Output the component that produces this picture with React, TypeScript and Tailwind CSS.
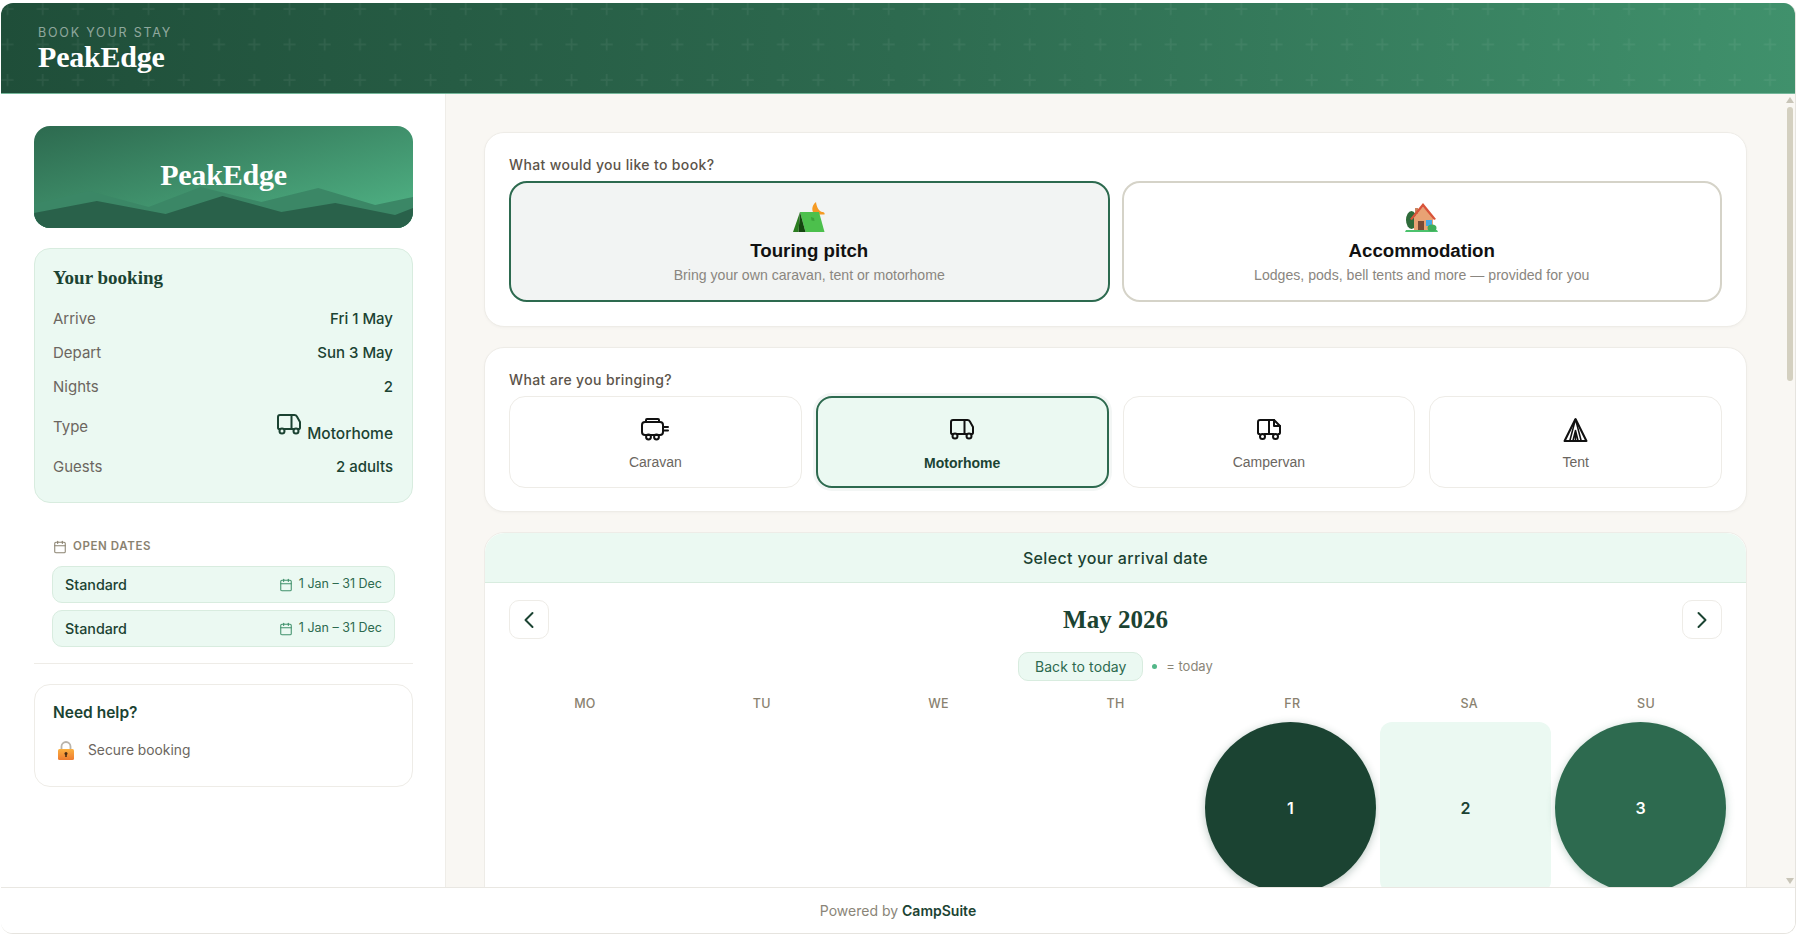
import { Calendar, ChevronLeft, ChevronRight } from "lucide-react";

const sans = "font-['Inter','Noto_Sans',sans-serif]";
const serif = "font-['Liberation_Serif',serif]";

function MotorhomeIcon({ className }: { className?: string }) {
  return (
    <svg viewBox="0 0 24 21" fill="none" stroke="currentColor" strokeWidth="2" strokeLinecap="round" strokeLinejoin="round" className={className}>
      <path d="M2.6 15A1.6 1.6 0 0 1 1 13.4V3a2 2 0 0 1 2-2h14.5c1 0 1.9.5 2.4 1.4L23 8v5.4a1.6 1.6 0 0 1-1.6 1.6" />
      <path d="M7.5 15h9M14.5 1v14" />
      <circle cx="5" cy="17" r="2.5" />
      <circle cx="19" cy="17" r="2.5" />
    </svg>
  );
}

function CaravanIcon({ className }: { className?: string }) {
  return (
    <svg viewBox="0 0 28 24" fill="none" stroke="currentColor" strokeWidth="2" strokeLinecap="round" strokeLinejoin="round" className={className}>
      <rect x="1" y="5" width="21" height="13" rx="3" />
      <path d="M5 5V3a1 1 0 0 1 1-1h11a1 1 0 0 1 1 1v2" />
      <circle cx="7.5" cy="20" r="2.4" />
      <circle cx="15.5" cy="20" r="2.4" />
      <path d="M23 10h4M23 13.5h4" />
    </svg>
  );
}

function CampervanIcon({ className }: { className?: string }) {
  return (
    <svg viewBox="0 0 24 21" fill="none" stroke="currentColor" strokeWidth="2" strokeLinecap="round" strokeLinejoin="round" className={className}>
      <path d="M2.6 15A1.6 1.6 0 0 1 1 13.4V3a2 2 0 0 1 2-2h14l6 6v6.4a1.6 1.6 0 0 1-1.6 1.6" />
      <path d="M7.5 15h9M12 1v14M17 1v6h6" />
      <circle cx="5.5" cy="17.5" r="2.5" />
      <circle cx="18.5" cy="17.5" r="2.5" />
    </svg>
  );
}

function TentIcon({ className }: { className?: string }) {
  return (
    <svg viewBox="0 0 24 24" fill="none" stroke="currentColor" strokeWidth="2" strokeLinejoin="round" className={className}>
      <path d="M12 2 1.500 23h21Z" />
      <path d="M12 2 6.500 23M12 2l5.500 21M9.500 23 12 13l2.500 10M12 13v10" strokeWidth="1.500" />
    </svg>
  );
}

function TentEmoji() {
  return (
    <svg viewBox="0 0 32 30" className="h-[30px] w-8">
      <path d="M23 0C18 4 18.500 10 22 12.500H31.500C32 11 31 10 29.500 10 26 9.500 23.500 5 23 0Z" fill="#f59a23" />
      <path d="M7 10h19l5.500 20H12.500Z" fill="#4cc04c" />
      <path d="M7 10 0 30h5.500Z" fill="#2a7d1f" />
      <path d="M7 10l5.500 20h-7Z" fill="#14470f" />
      <path d="m18 15 3 1 .5 3-3-.500Z" fill="#3ba33b" />
    </svg>
  );
}

function HouseEmoji() {
  return (
    <svg viewBox="0 0 33 30" className="h-[30px] w-[33px]">
      <ellipse cx="6.500" cy="18" rx="5.500" ry="9" fill="#2e6b3a" />
      <path d="M1 28h31l1 2H0Z" fill="#4cc26d" />
      <path d="M9 15 18 5l10 10v13H9Z" fill="#e8a274" />
      <path d="M10 6h3v6h-3Z" fill="#c98560" />
      <path d="M5 17 18 1l13 16-2 1L18 5 7 18Z" fill="#d9543a" />
      <path d="M13 19h6v9h-6Z" fill="#7a4a35" />
      <path d="M21 18h6v6h-6Z" fill="#45a8e6" />
      <ellipse cx="27" cy="26" rx="4.500" ry="3.500" fill="#3fae5a" />
    </svg>
  );
}

function LockEmoji() {
  return (
    <svg viewBox="0 0 16 19" className="h-[19px] w-4">
      <defs>
        <linearGradient id="lockBody" x1="0" y1="0" x2="0" y2="1">
          <stop offset="0" stopColor="#fbb040" />
          <stop offset="1" stopColor="#ee7b30" />
        </linearGradient>
      </defs>
      <path d="M3.500 9V5.500a4.500 4.500 0 0 1 9 0V9" fill="none" stroke="#b9b4ab" strokeWidth="1.800" />
      <rect x="0" y="8" width="16" height="11" rx="1.500" fill="url(#lockBody)" />
      <circle cx="8" cy="12.500" r="1.500" fill="#4a2c14" />
      <rect x="7.200" y="12.500" width="1.600" height="3.500" fill="#4a2c14" />
    </svg>
  );
}

const summary = [
  { label: "Arrive", value: "Fri 1 May" },
  { label: "Depart", value: "Sun 3 May" },
  { label: "Nights", value: "2" },
];

const vehicles = [
  { name: "Caravan", icon: <CaravanIcon className="h-[24px] w-[28px]" />, selected: false },
  { name: "Motorhome", icon: <MotorhomeIcon className="h-[21px] w-6" />, selected: true },
  { name: "Campervan", icon: <CampervanIcon className="h-[21px] w-6" />, selected: false },
  { name: "Tent", icon: <TentIcon className="h-[25px] w-[25px]" />, selected: false },
];

const weekdays = ["MO", "TU", "WE", "TH", "FR", "SA", "SU"];

function Sidebar() {
  return (
    <aside className="flex w-[445px] flex-none flex-col border-r border-[#efede8] bg-white pl-[33px] pr-[32px] pt-[32px]">
      <div className="relative h-[102px] overflow-hidden rounded-2xl bg-linear-to-br from-[#2d6a4f] to-[#52b788]">
        <svg viewBox="0 0 380 102" className="absolute inset-0 h-full w-full" preserveAspectRatio="none">
          <path d="M0 78 55 65l60 16 52-20 61 15 57-14 57 17 38-8v31H0Z" fill="#3b8766" />
          <path d="M0 87 63 75l69 13 57-18 59 16 54-9 60 12 18-7v20H0Z" fill="#29614a" />
        </svg>
        <div className={`relative flex h-full items-center justify-center pb-[4px] text-[30px] font-bold leading-none tracking-[-0.2px] text-white ${serif}`}>
          PeakEdge
        </div>
      </div>

      <div className="mt-5 rounded-2xl border border-[#d8ecdf] bg-[#ebf9f2] pb-[18px] pl-[18px] pr-[19px] pt-[18px]">
        <h2 className={`h-[35px] text-[19px] font-bold leading-[22px] text-[#1b4332] ${serif}`}>Your booking</h2>
        {summary.map((row) => (
          <div key={row.label} className="flex h-[34px] items-center justify-between text-[15px]">
            <span className="text-[#6b6660]">{row.label}</span>
            <span className="font-medium text-[#1b4332]">{row.value}</span>
          </div>
        ))}
        <div className="flex h-[46px] items-center justify-between text-[15px]">
          <span className="text-[#6b6660]">Type</span>
          <span className="mt-[3px] flex items-end gap-[6px] text-[15.5px] font-medium leading-[18px] text-[#1b4332]">
            <MotorhomeIcon className="mb-[8px] h-[21px] w-6" />
            Motorhome
          </span>
        </div>
        <div className="flex h-[34px] items-center justify-between text-[15px]">
          <span className="text-[#6b6660]">Guests</span>
          <span className="font-medium text-[#1b4332]">2 adults</span>
        </div>
      </div>

      <div className="mt-[35px] px-[18px]">
        <div className="flex h-[18px] items-center gap-[6px] pl-[1px] text-[11.5px] font-semibold tracking-[0.6px] text-[#8a8270]">
          <Calendar size={14} strokeWidth={1.8} />
          OPEN DATES
        </div>
        {[0, 1].map((i) => (
          <div
            key={i}
            className={`flex h-[37px] items-center justify-between rounded-[10px] border border-[#d8ecdf] bg-[#ebf9f2] pl-[12px] pr-[12px] ${i === 0 ? "mt-[10px]" : "mt-[7px]"}`}
          >
            <span className="text-[14.3px] font-medium text-[#1b4332]">Standard</span>
            <span className="flex items-center gap-[6px] text-[12.5px] text-[#2d6a4f]">
              <Calendar size={14} strokeWidth={1.8} className="text-[#40916c]" />1 Jan – 31 Dec
            </span>
          </div>
        ))}
      </div>

      <div className="mt-4 h-px bg-[#eeece7]" />

      <div className="mt-5 h-[103px] rounded-2xl border border-[#eeece7] bg-white px-[18px] pt-[17px]">
        <h3 className="text-[15.5px] font-semibold leading-[22px] text-[#1b4332]">Need help?</h3>
        <div className="mt-[16px] flex items-center gap-[14px] pl-[5px] text-[13.8px] text-[#6b6660]">
          <LockEmoji />
          Secure booking
        </div>
      </div>
    </aside>
  );
}

function Scrollbar() {
  return (
    <div className="absolute bottom-0 right-0 top-0 flex w-[10px] flex-col items-center pr-[1px] pt-[3px]">
      <div className="h-0 w-0 border-x-[4px] border-b-[6px] border-x-transparent border-b-[#c9c5b8]" />
      <div className="mt-[4px] h-[274px] w-[6px] rounded-full bg-[#d4d0c0]" />
      <div className="mb-[3px] mt-auto h-0 w-0 border-x-[4px] border-t-[6px] border-x-transparent border-t-[#c9c5b8]" />
    </div>
  );
}

function Main() {
  return (
    <main className="relative flex-1 overflow-hidden bg-[#f9f7f3]">
      <div className="flex flex-col gap-5 pl-[38px] pr-[48px] pt-[38px]">
        <section className="rounded-[20px] border border-[#eeece7] bg-white px-6 pb-6 pt-[23px] shadow-[0_1px_3px_rgba(0,0,0,0.03)]">
          <p className="mb-[7px] text-[14px] font-medium leading-[18px] tracking-[0.35px] text-[#5c544a]">What would you like to book?</p>
          <div className="grid grid-cols-2 gap-3 font-['Liberation_Sans',sans-serif]">
            <button className="flex h-[121px] flex-col items-center rounded-[18px] border-2 border-[#2d6a4f] bg-[#f2f4f3] pt-[19px]">
              <TentEmoji />
              <span className="mt-[8px] text-[18.7px] font-bold leading-[22px] text-[#111111]">Touring pitch</span>
              <span className="mt-[3px] text-[14.1px] leading-[20px] text-[#8a8680]">Bring your own caravan, tent or motorhome</span>
            </button>
            <button className="flex h-[121px] flex-col items-center rounded-[18px] border-2 border-[#d5d3c8] bg-white pt-[19px]">
              <HouseEmoji />
              <span className="mt-[8px] text-[18.7px] font-bold leading-[22px] text-[#111111]">Accommodation</span>
              <span className="mt-[3px] text-[14.1px] leading-[20px] text-[#8a8680]">Lodges, pods, bell tents and more — provided for you</span>
            </button>
          </div>
        </section>

        <section className="rounded-[20px] border border-[#eeece7] bg-white px-6 pb-[23px] pt-[23px] shadow-[0_1px_3px_rgba(0,0,0,0.03)]">
          <p className="mb-[7px] text-[14px] font-medium leading-[18px] tracking-[0.35px] text-[#5c544a]">What are you bringing?</p>
          <div className="grid grid-cols-4 gap-[14px] font-['Liberation_Sans',sans-serif]">
            {vehicles.map((v) => (
              <button
                key={v.name}
                className={
                  v.selected
                    ? "flex h-[92px] flex-col items-center justify-center rounded-2xl border-2 border-[#2d6a4f] bg-[#ebf9f2] pt-[5px] text-[14px] font-bold text-[#1b4332] shadow-[0_0_0_3px_rgba(45,106,79,0.06)]"
                    : "flex h-[92px] flex-col items-center justify-center rounded-2xl border border-[#eeece7] bg-white pt-[4px] text-[14px] text-[#6b665f]"
                }
              >
                <span className="flex h-[26px] items-center text-[#111111]">{v.icon}</span>
                <span className="mt-[10px] leading-[20px]">{v.name}</span>
              </button>
            ))}
          </div>
        </section>

        <section className="rounded-t-[20px] border border-[#eeece7] bg-white">
          <div className="flex h-[50px] items-center justify-center rounded-t-[20px] border-b border-[#d8ecdf] bg-[#ebf9f2] text-[16px] font-medium tracking-[0.35px] text-[#1b4332]">
            Select your arrival date
          </div>
          <div className="px-6 pt-[17px]">
            <div className="flex items-center justify-between">
              <button className="flex h-[39px] w-10 items-center justify-center rounded-[10px] border border-[#eeece7] bg-white text-[#1b4332]">
                <ChevronLeft size={28} strokeWidth={1.7} />
              </button>
              <h2 className={`text-[25px] font-bold text-[#1b4332] ${serif}`}>May 2026</h2>
              <button className="flex h-[39px] w-10 items-center justify-center rounded-[10px] border border-[#eeece7] bg-white text-[#1b4332]">
                <ChevronRight size={28} strokeWidth={1.7} />
              </button>
            </div>
            <div className="mt-[13px] flex items-center justify-center gap-[9px]">
              <button className="flex h-[29px] w-[125px] items-center justify-center rounded-[10px] border border-[#d8ecdf] bg-[#ebf9f2] text-[14px] tracking-[0.1px] text-[#2d6a4f]">
                Back to today
              </button>
              <span className="h-[5px] w-[5px] rounded-full bg-[#52b788]" />
              <span className="text-[13px] text-[#8a8578]">= today</span>
            </div>
            <div className="mt-[14px] grid grid-cols-7 gap-[25px]">
              {weekdays.map((d) => (
                <div key={d} className="text-center text-[12.5px] font-medium leading-[18px] tracking-[0.3px] text-[#8a8270]">
                  {d}
                </div>
              ))}
            </div>
            <div className="-mx-1 mt-[9px] grid grid-cols-7 gap-1">
              <div />
              <div />
              <div />
              <div />
              <div className="flex aspect-square items-center justify-center rounded-full bg-[#1b4332] text-[16px] font-semibold text-white shadow-[0_2px_8px_rgba(27,67,50,0.3)]">
                1
              </div>
              <div className="flex aspect-square items-center justify-center rounded-xl bg-[#ebf9f2] text-[16px] font-semibold text-[#1b4332]">
                2
              </div>
              <div className="flex aspect-square items-center justify-center rounded-full bg-[#2d6a4f] text-[16px] font-semibold text-white shadow-[0_2px_8px_rgba(45,106,79,0.3)]">
                3
              </div>
            </div>
          </div>
        </section>
      </div>
      <Scrollbar />
    </main>
  );
}

export default function App() {
  return (
    <div className={`h-[935px] w-[1800px] overflow-hidden bg-white pb-px pl-px pr-1 pt-[3px] ${sans}`}>
      <div className="flex h-full flex-col overflow-hidden rounded-[12px] border-b border-r border-[#e6e4df]">
        <header className="relative h-[91px] flex-none overflow-hidden border-b border-[#74b79a] bg-linear-to-r from-[#1f4e39] via-[#2d6a4f] to-[#40916c]">
          <svg className="absolute inset-0 h-full w-full">
            <defs>
              <pattern id="plus" x="0" y="-1" width="35.25" height="35.5" patternUnits="userSpaceOnUse">
                <path d="M6.500 1v12M.5 7h12" stroke="#ffffff" strokeOpacity="0.06" strokeWidth="1.700" />
              </pattern>
            </defs>
            <rect width="100%" height="100%" fill="url(#plus)" />
          </svg>
          <div className="relative flex h-full flex-col pl-[37px] pt-[22px]">
            <span className="text-[12.5px] leading-[16px] tracking-[1.8px] text-white/50">BOOK YOUR STAY</span>
            <span className={`-mt-[1px] text-[30px] font-bold leading-[34px] tracking-[-0.2px] text-white ${serif}`}>PeakEdge</span>
          </div>
        </header>
        <div className="flex min-h-0 flex-1">
          <Sidebar />
          <Main />
        </div>
        <footer className="flex h-[46px] flex-none items-center justify-center border-t border-[#e9e7e2] bg-white text-[14px] text-[#8a8578]">
          Powered by&nbsp;<span className="font-semibold text-[#1b4332]">CampSuite</span>
        </footer>
      </div>
    </div>
  );
}
